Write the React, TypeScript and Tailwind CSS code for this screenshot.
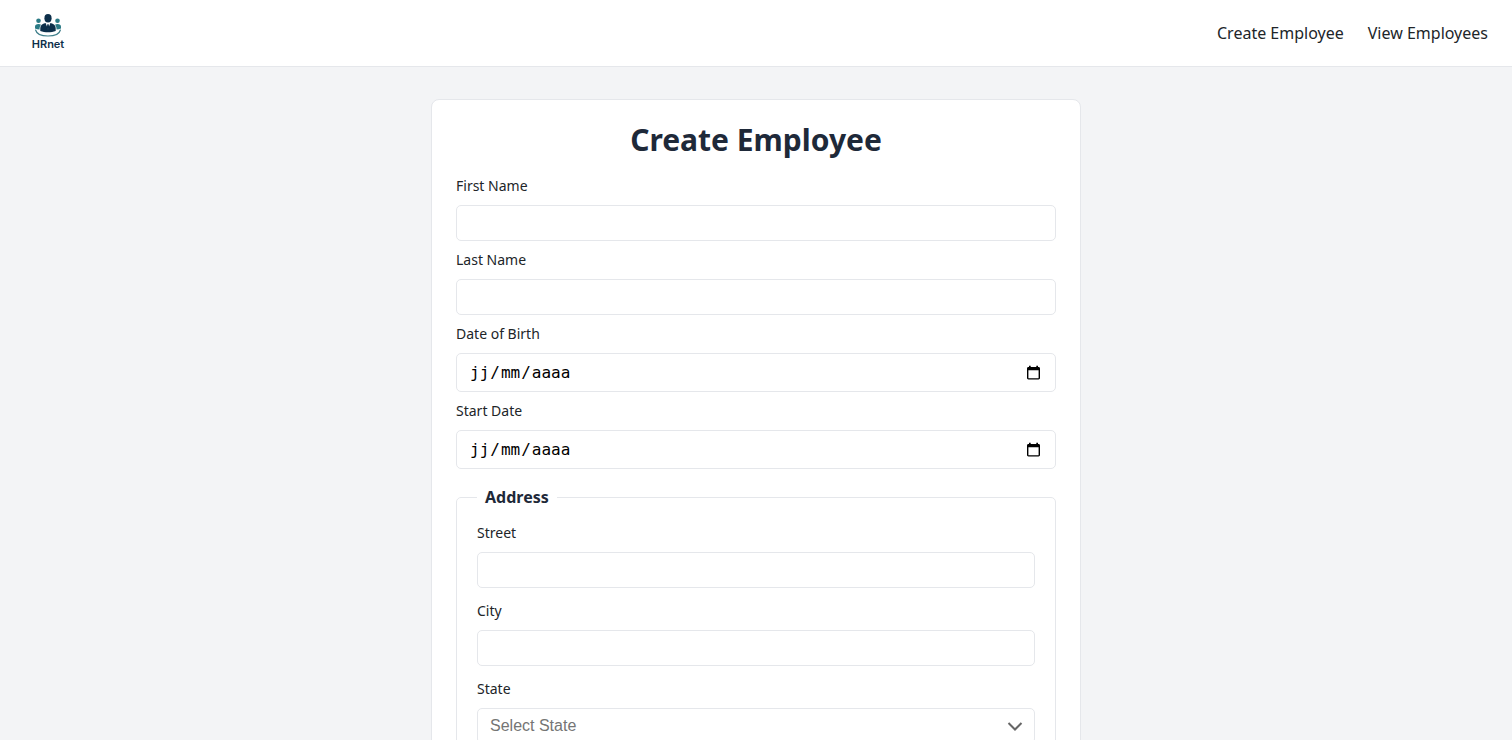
import { useState } from 'react';
import type { ReactNode } from 'react';

const inputClass =
    'h-9 w-full rounded-[5px] border border-gray-200 bg-white px-3 font-["Liberation_Sans",sans-serif] text-base outline-none focus:border-gray-400';

const partClass =
    'box-content bg-transparent p-px font-["DejaVu_Sans_Mono",monospace] text-base leading-5 text-black outline-none placeholder:text-black placeholder:opacity-100';

const STATES = ['Alabama', 'Alaska', 'Arizona', 'California', 'Colorado', 'Florida', 'New York', 'Texas'];

function Logo() {
    return (
        <svg viewBox="0 0 48 48" className="size-12" role="img" aria-label="HRnet">
            {/* side figures */}
            <g fill="#2b7a85">
                <circle cx="14.5" cy="11.8" r="2.3" />
                <circle cx="33.5" cy="11.8" r="2.3" />
                <path d="M11 19.600v-1.800c0-2 1.300-2.900 3.500-2.900 1.100 0 1.900.200 2.500.800-1 1.300-1.500 2.500-1.500 4.700-1.700 0-3.200-.200-4.500-.8z" />
                <path d="M37 19.600v-1.800c0-2-1.300-2.900-3.500-2.900-1.100 0-1.900.200-2.500.800 1 1.300 1.500 2.500 1.500 4.700 1.700 0 3.200-.200 4.500-.8z" />
            </g>
            {/* main figure */}
            <g fill="#0d2f4a">
                <ellipse cx="24" cy="9.200" rx="3.6" ry="4.200" />
                <path d="M16.300 21.900v-2.800c0-3 2-4.400 5.200-5.200L24 16.900l2.500-3c3.200.800 5.200 2.200 5.200 5.200v2.800c-4.500 1.700-10.900 1.700-15.400 0z" />
            </g>
            <path d="M21.700 14 24 20.600l2.300-6.600L24 15.400z" fill="#fff" />
            <path d="m23.300 15.300-.5 3.600L24 20.900l1.200-2-.5-3.600z" fill="#0d2f4a" />
            <path
                d="M11.600 21c1 3.900 6.200 6 12.400 6s11.400-2.100 12.400-6"
                fill="none"
                stroke="#3f7f8b"
                strokeWidth="1.200"
                strokeLinecap="round"
            />
            <text x="24" y="39" textAnchor="middle" fill="#0d2f4a" className="font-['Inter',sans-serif] text-[11px] font-semibold">
                HRnet
            </text>
        </svg>
    );
}

function Label({ htmlFor, children }: { htmlFor: string; children: ReactNode }) {
    return (
        <label htmlFor={htmlFor} className="text-sm leading-[22px]">
            {children}
        </label>
    );
}

function TextField({ id, label }: { id: string; label: string }) {
    return (
        <div className="flex flex-col gap-2">
            <Label htmlFor={id}>{label}</Label>
            <input id={id} name={id} type="text" className={inputClass} />
        </div>
    );
}

function DateField({ id, label }: { id: string; label: string }) {
    return (
        <div className="flex flex-col gap-2">
            <Label htmlFor={id}>{label}</Label>
            <div
                role="group"
                aria-label={label}
                className="flex h-[39px] items-center rounded-[5px] border border-gray-200 bg-white px-3 font-['DejaVu_Sans_Mono',monospace] text-base text-black"
            >
                <input id={id} maxLength={2} placeholder="jj" className={`${partClass} w-[2ch]`} />
                <span>/</span>
                <input aria-label={`${label} month`} maxLength={2} placeholder="mm" className={`${partClass} w-[2ch]`} />
                <span>/</span>
                <input aria-label={`${label} year`} maxLength={4} placeholder="aaaa" className={`${partClass} w-[4ch]`} />
                <button type="button" aria-label={`Open ${label} calendar`} className="ml-auto px-0.5">
                    <svg viewBox="0 0 15 16" className="h-4 w-[15px]" fill="currentColor">
                        <path d="M12.500 2H12V.8h-1.700V2H4.700V.8H3V2h-.5C1.600 2 1 2.600 1 3.400v9.700c0 .8.600 1.400 1.500 1.400h10c.9 0 1.500-.6 1.500-1.400V3.400c0-.8-.6-1.400-1.500-1.400zm.1 11.200H2.400V5.200h10.200z" />
                    </svg>
                </button>
            </div>
        </div>
    );
}

export default function App() {
    const [state, setState] = useState('');

    return (
        <div className="min-h-screen bg-gray-100 font-['Noto_Sans',sans-serif] text-[#212529]">
            <header className="flex items-center justify-between border-b border-gray-200 bg-white px-6 py-[9px]">
                <a href="#home">
                    <Logo />
                </a>
                <nav className="flex gap-6">
                    <a href="#create">Create Employee</a>
                    <a href="#employees">View Employees</a>
                </nav>
            </header>

            <main className="px-4 py-8">
                <form className="mx-auto max-w-[650px] rounded-lg border border-gray-200 bg-white px-6 pt-6 pb-12">
                    <h1 className="text-center text-3xl leading-8 font-bold text-gray-800">Create Employee</h1>

                    <div className="mt-[19px] flex flex-col gap-2">
                        <TextField id="firstName" label="First Name" />
                        <TextField id="lastName" label="Last Name" />
                        <DateField id="dateOfBirth" label="Date of Birth" />
                        <DateField id="startDate" label="Start Date" />
                    </div>

                    <fieldset className="mt-4 rounded-[5px] border border-gray-200 px-5 pb-5">
                        <legend className="px-2 font-bold text-gray-800">Address</legend>
                        <div className="flex flex-col gap-3 pt-[13px]">
                            <TextField id="street" label="Street" />
                            <TextField id="city" label="City" />
                            <div className="flex flex-col gap-2">
                                <Label htmlFor="state">State</Label>
                                <div className="grid items-center">
                                    <select
                                        id="state"
                                        value={state}
                                        onChange={(e) => setState(e.target.value)}
                                        className={`${inputClass} col-start-1 row-start-1 appearance-none text-[#757575]`}
                                    >
                                        <option value="">Select State</option>
                                        {STATES.map((s) => (
                                            <option key={s}>{s}</option>
                                        ))}
                                    </select>
                                    <svg
                                        viewBox="0 0 16 16"
                                        className="pointer-events-none col-start-1 row-start-1 mr-3 size-4 justify-self-end text-[#666666]"
                                        fill="none"
                                        stroke="currentColor"
                                        strokeWidth="2"
                                    >
                                        <path d="m1.500 5 6.500 6.500L14.500 5" />
                                    </svg>
                                </div>
                            </div>
                        </div>
                    </fieldset>
                </form>
            </main>
        </div>
    );
}
